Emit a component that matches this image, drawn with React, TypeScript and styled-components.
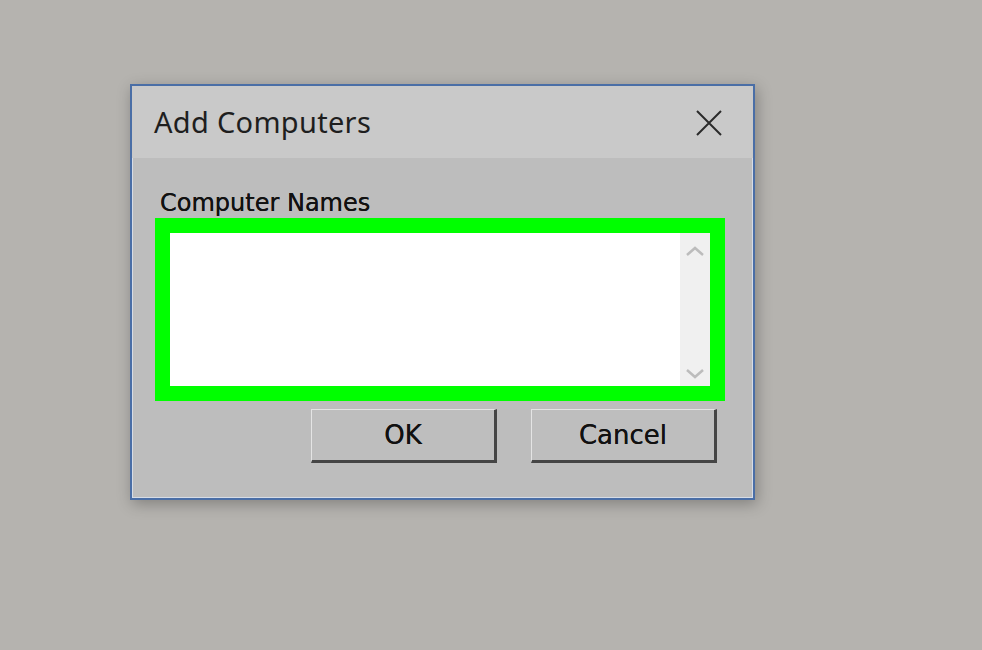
import styled, { createGlobalStyle } from "styled-components";

const GlobalStyle = createGlobalStyle`
  html, body {
    margin: 0;
    padding: 0;
    background: #b5b3af;
  }
  body {
    font-family: "Noto Sans", "DejaVu Sans", sans-serif;
  }
`;

const Page = styled.div`
  width: 982px;
  height: 650px;
  box-sizing: border-box;
  padding: 84px 0 0 130px;
  background: #b5b3af;
  overflow: hidden;
`;

const Dialog = styled.div`
  width: 625px;
  height: 416px;
  box-sizing: border-box;
  border: 2px solid #4a6ea6;
  background: #bdbdbd;
  display: flex;
  flex-direction: column;
  box-shadow: 0 0 0 1px #d6dce6 inset, 2px 4px 14px rgba(0, 0, 0, 0.28);
`;

const TitleBar = styled.div`
  height: 72px;
  flex: 0 0 72px;
  background: #c9c9c9;
  display: flex;
  align-items: center;
  justify-content: space-between;
  padding: 0 30px 0 22px;
`;

const Title = styled.span`
  font-size: 29px;
  color: #1e1e1e;
  letter-spacing: 0.3px;
  margin-top: -2px;
`;

const CloseButton = styled.div`
  width: 28px;
  height: 28px;
  display: flex;
  align-items: center;
  justify-content: center;
  margin-top: 2px;
`;

const Body = styled.div`
  flex: 1;
  display: flex;
  flex-direction: column;
  padding: 30px 28px 0 23px;
`;

const Label = styled.div`
  font-family: "DejaVu Sans", sans-serif;
  font-size: 24px;
  color: #111;
  text-shadow: 0 0 0.5px #111;
  margin-left: 5px;
  height: 30px;
  line-height: 30px;
`;

const Highlight = styled.div`
  width: 570px;
  height: 183px;
  box-sizing: border-box;
  border: 15px solid #00ff00;
  background: #ffffff;
  display: flex;
  justify-content: flex-end;
`;

const ScrollBar = styled.div`
  width: 30px;
  background: #f0f0f0;
  display: flex;
  flex-direction: column;
  justify-content: space-between;
  align-items: center;
  padding: 12px 0 6px;
`;

const Buttons = styled.div`
  display: flex;
  justify-content: flex-end;
  gap: 34px;
  margin-top: 8px;
  padding-right: 8px;
`;

const Button = styled.div`
  width: 186px;
  height: 54px;
  box-sizing: border-box;
  background: #bebebe;
  border-top: 1px solid #e4e4e4;
  border-left: 1px solid #e4e4e4;
  border-right: 3px solid #454545;
  border-bottom: 3px solid #454545;
  display: flex;
  align-items: center;
  justify-content: center;
  font-family: "DejaVu Sans", sans-serif;
  font-size: 26px;
  color: #111;
  text-shadow: 0 0 0.6px #111;
`;

const Chevron = ({ up }: { up?: boolean }) => (
  <svg width="20" height="12" viewBox="0 0 20 12">
    <path
      d={up ? "M2 10 L10 3 L18 10" : "M2 2 L10 9 L18 2"}
      fill="none"
      stroke="#bcbcbc"
      strokeWidth="2.5"
    />
  </svg>
);

export default function App() {
  return (
    <Page>
      <GlobalStyle />
      <Dialog>
        <TitleBar>
          <Title>Add Computers</Title>
          <CloseButton>
            <svg width="26" height="26" viewBox="0 0 26 26">
              <path d="M1 1 L25 25 M25 1 L1 25" stroke="#2a2a2a" strokeWidth="2" />
            </svg>
          </CloseButton>
        </TitleBar>
        <Body>
          <Label>Computer Names</Label>
          <Highlight>
            <ScrollBar>
              <Chevron up />
              <Chevron />
            </ScrollBar>
          </Highlight>
          <Buttons>
            <Button>OK</Button>
            <Button>Cancel</Button>
          </Buttons>
        </Body>
      </Dialog>
    </Page>
  );
}
